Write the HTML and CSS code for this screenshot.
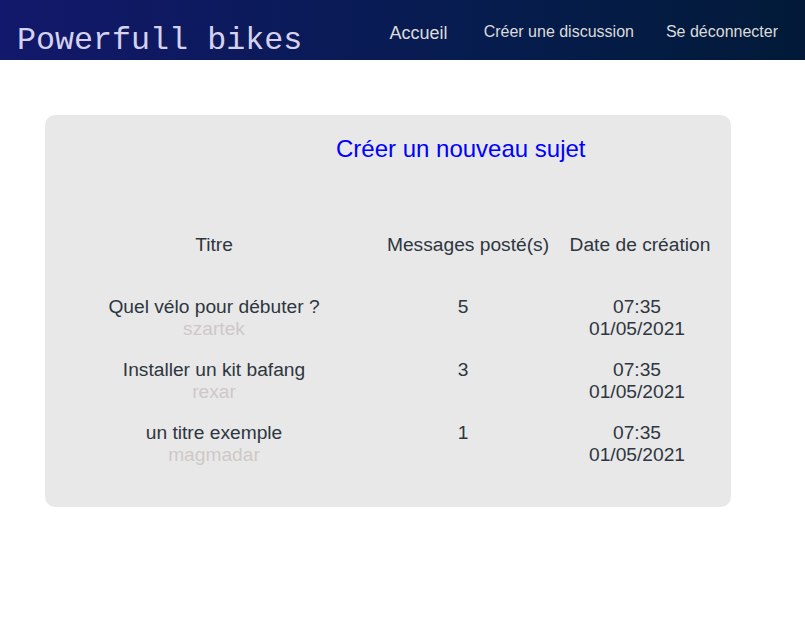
FILE: index.html
```html
<!DOCTYPE html>
<html lang="fr">
<head>
<meta charset="utf-8">
<title>Powerfull bikes</title>
<link rel="stylesheet" href="styles.css">
</head>
<body>
<header class="topbar">
  <h1 class="brand">Powerfull bikes</h1>
  <nav class="nav">
    <a class="nav-link nav-current" href="#">Accueil</a>
    <a class="nav-link" href="#">Créer une discussion</a>
    <a class="nav-link" href="#">Se déconnecter</a>
  </nav>
</header>
<main class="main">
  <section class="card">
    <a class="new-topic" href="#">Créer un nouveau sujet</a>
    <div class="topics">
      <div class="row head">
        <div class="c1">Titre</div>
        <div class="c2">Messages posté(s)</div>
        <div class="c3">Date de création</div>
      </div>
      <div class="row">
        <div class="c1">Quel vélo pour débuter ?<span class="author">szartek</span></div>
        <div class="c2 num">5</div>
        <div class="c3 date">07:35<br>01/05/2021</div>
      </div>
      <div class="row">
        <div class="c1">Installer un kit bafang<span class="author">rexar</span></div>
        <div class="c2 num">3</div>
        <div class="c3 date">07:35<br>01/05/2021</div>
      </div>
      <div class="row">
        <div class="c1">un titre exemple<span class="author">magmadar</span></div>
        <div class="c2 num">1</div>
        <div class="c3 date">07:35<br>01/05/2021</div>
      </div>
    </div>
  </section>
</main>
</body>
</html>
```

FILE: styles.css
```css
* { box-sizing: border-box; }
html, body { margin: 0; padding: 0; background: #fff; }
body { font-family: "Liberation Sans", Arial, sans-serif; }

.topbar {
  height: 60px;
  background: linear-gradient(to right, #12186b, #061c4e 60%, #021a38);
  display: flex;
  justify-content: space-between;
  align-items: flex-start;
}
.brand {
  margin: 0;
  padding: 23px 0 0 17px;
  font-family: "Liberation Mono", "Courier New", monospace;
  font-weight: normal;
  font-size: 31.7px;
  line-height: 36px;
  color: #d6d2ee;
}
.nav {
  display: flex;
  align-items: baseline;
  padding: 21px 27px 0 0;
  gap: 32px;
}
.nav-link {
  color: #dcdcdc;
  text-decoration: none;
  font-size: 16px;
  line-height: 20px;
}
.nav-current {
  font-size: 18px;
  margin-right: 4px;
  position: relative;
  top: 2px;
}

.main { padding: 55px 0 0 45px; }
.card {
  width: 686px;
  background: #e8e8e8;
  border-radius: 10px;
  padding: 23px 0 41px 0;
}
.new-topic {
  display: block;
  width: max-content;
  margin-left: 291px;
  color: #0000ff;
  text-decoration: none;
  font-size: 24px;
  line-height: 22px;
  margin-bottom: 74px;
}
.topics { color: #2e3640; font-size: 19.2px; line-height: 22px; }
.row {
  display: grid;
  grid-template-columns: 248px 218px 159px;
  margin-left: 45px;
  margin-bottom: 19px;
  text-align: center;
}
.row:last-child { margin-bottom: 0; }
.row.head { margin-bottom: 40px; }
.row .c2 { padding-left: 42px; }
.row .c3 { padding-left: 9px; }
.row .c2.num { padding-left: 32px; }
.row .c3.date { padding-left: 3px; }
.author { display: block; color: #cfc8c8; }
```
